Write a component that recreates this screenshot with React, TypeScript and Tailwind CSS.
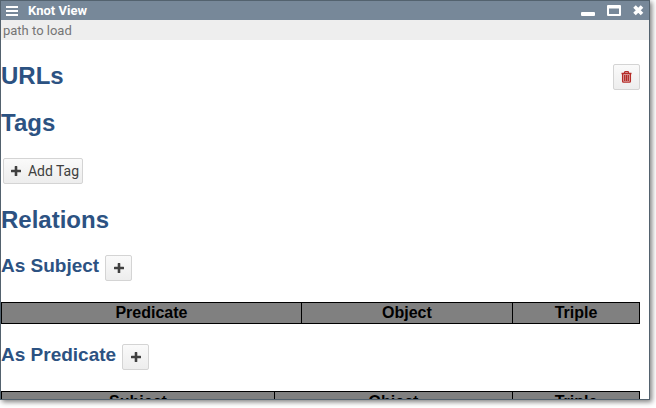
const h2 = "text-2xl leading-7 font-bold text-[#2c5282]";
const h3 = "text-[19px] leading-[22px] font-bold text-[#2c5282]";
const button =
  "flex h-[26px] items-center justify-center rounded-[2px] border border-[#d4d4d4] bg-linear-to-b from-[#fafafa] to-[#ededed]";

const PlusIcon = () => (
  <svg width="10" height="10" viewBox="0 0 10 10" fill="currentColor">
    <path d="M4.200 0h1.600q.5 0 .5.5v3.200h3.200q.5 0 .5.5v1.600q0 .5-.5.5H6.300v3.200q0 .5-.5.5H4.200q-.5 0-.5-.5V6.300H.5Q0 6.300 0 5.800V4.200q0-.5.5-.5h3.200V.5Q3.700 0 4.200 0z" />
  </svg>
);

const PlusButton = ({ label }: { label: string }) => (
  <button type="button" aria-label={label} className={`${button} w-[27px] text-[#404040]`}>
    <PlusIcon />
  </button>
);

const TripleTable = ({ columns, widths }: { columns: string[]; widths: string[] }) => (
  <table className="mb-5 w-full table-fixed border-collapse border border-black bg-[#808080] text-base leading-5 text-black">
    <thead>
      <tr>
        {columns.map((name, i) => (
          <th key={name} className={`border border-black p-0 font-bold ${widths[i]}`}>
            {name}
          </th>
        ))}
      </tr>
    </thead>
  </table>
);

export default function App() {
  return (
    <div className="h-screen bg-white pr-1.5 pb-2 font-['Liberation_Sans',Arial,sans-serif]">
      <section className="flex h-full flex-col overflow-hidden border border-[#53626e] shadow-[2px_2px_5px_rgba(0,0,0,0.5)]">
        <header className="flex h-[19px] shrink-0 items-center bg-[#778899] px-1 text-white">
          <svg width="13" height="11" viewBox="0 0 13 11" fill="currentColor">
            <path d="M1 1h12v2H1zM1 5h12v2H1zM1 9h12v2H1z" />
          </svg>
          <h1 className="ml-2.5 flex-1 font-[Roboto] text-[13px] font-bold">Knot View</h1>
          <div className="flex items-center gap-3">
            <button type="button" aria-label="Minimize">
              <svg width="14" height="14" viewBox="0 0 14 14" fill="currentColor">
                <rect y="8" width="14" height="4" rx="1" />
              </svg>
            </button>
            <button type="button" aria-label="Maximize">
              <svg width="14" height="14" viewBox="0 0 14 14" fill="currentColor">
                <path fillRule="evenodd" d="M1 1h12q1 0 1 1v9q0 1-1 1H1q-1 0-1-1V2q0-1 1-1zm1 3.500v5.500h10V4.500z" />
              </svg>
            </button>
            <button type="button" aria-label="Close">
              <svg width="12" height="12" viewBox="0 0 12 12" stroke="currentColor" strokeWidth="3.6">
                <path d="M1.500 1.500l7.500 7.500M9 1.500l-7.500 7.500" />
              </svg>
            </button>
          </div>
        </header>
        <input
          aria-label="Path"
          placeholder="path to load"
          className="h-5 shrink-0 bg-[#eeeeee] px-0.5 font-[Roboto] text-[13px] placeholder:text-[#757575]"
        />
        <main className="min-h-0 flex-1 overflow-hidden pr-[9px]">
          <div className="mt-[22px] flex items-end justify-between">
            <h2 className={h2}>URLs</h2>
            <button type="button" aria-label="Delete" className={`${button} w-[27px] text-[#b52b27]`}>
              <svg width="11" height="12" viewBox="0 0 11 12" fill="none" stroke="currentColor" strokeWidth="1.3">
                <path d="M1.500 3h8v7.500h-8z" fill="currentColor" fillOpacity="0.3" stroke="none" />
                <path d="M0.500 2.500h10M3.500 2.500v-1q0-.8.8-.8h2.400q.8 0 .8.8v1M1.600 3v7.200q0 1 .9 1h6q.9 0 .9-1V3M3.700 4v6M5.500 4v6M7.300 4v6" />
              </svg>
            </button>
          </div>
          <h2 className={`mt-[19px] ${h2}`}>Tags</h2>
          <button
            type="button"
            className={`mt-[21px] ml-0.5 w-20 gap-[7px] pl-1 ${button} font-[Roboto] text-sm text-[#404040]`}
          >
            <PlusIcon />
            Add Tag
          </button>
          <h2 className={`mt-[22px] mb-[21px] ${h2}`}>Relations</h2>
          <div className="mb-[21px] flex items-start gap-1.5">
            <h3 className={h3}>As Subject</h3>
            <PlusButton label="Add as subject" />
          </div>
          <TripleTable columns={["Predicate", "Object", "Triple"]} widths={["w-[47%]", "", "w-[127px]"]} />
          <div className="mb-[21px] flex items-start gap-1.5">
            <h3 className={h3}>As Predicate</h3>
            <PlusButton label="Add as predicate" />
          </div>
          <TripleTable columns={["Subject", "Object", "Triple"]} widths={["w-[273px]", "", "w-[127px]"]} />
        </main>
      </section>
    </div>
  );
}
